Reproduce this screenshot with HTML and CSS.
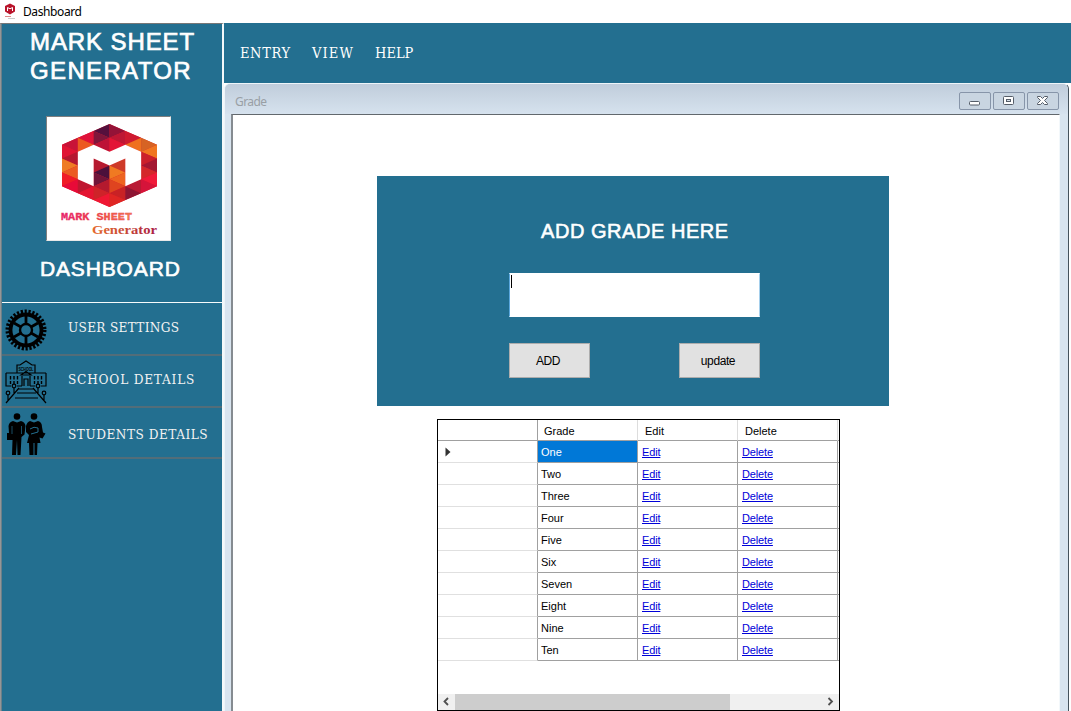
FILE: index.html
```html
<!DOCTYPE html>
<html lang="en">
<head>
<meta charset="utf-8">
<title>Dashboard</title>
<link rel="stylesheet" href="styles.css">
</head>
<body>
<header class="titlebar">
  <svg class="app-icon" width="14" height="18" viewBox="0 0 14 18"><path d="M7 0.500L12 3v5.500L7 11.500 2 8.500V3z" fill="#b9142b"/><path d="M4.500 8V4.500l2.500 1.300 2.500-1.300V8" fill="none" stroke="#fff" stroke-width="1"/><path d="M2 13.500h6" stroke="#d88"/><path d="M5 15.500h7" stroke="#ccc"/></svg>
  <span class="app-title">Dashboard</span>
</header>
<div class="shell">
  <aside class="sidebar">
    <h1 class="brand"><span class="brand-a">MARK SHEET</span><br><span class="brand-b">GENERATOR</span></h1>
    <div class="logo">
      <svg width="123" height="123" viewBox="0 0 123 123">
        <defs>
          <linearGradient id="g1"><stop offset="0" stop-color="#e6177c"/><stop offset=".5" stop-color="#ee4540"/><stop offset="1" stop-color="#f58a4b"/></linearGradient>
          <linearGradient id="g2"><stop offset="0" stop-color="#e56a2c"/><stop offset=".5" stop-color="#c94a35"/><stop offset="1" stop-color="#a91c42"/></linearGradient>
        </defs>
        <g transform="translate(15 7) scale(15.830 6.920)">
          <path d="M3 0L6 3V9L3 12 0 9V3z" fill="#d81d2c"/>
          <path d="M0 3L1 2V4z" fill="#c81338"/><path d="M0 3V5L1 4z" fill="#e01434"/><path d="M0 5L1 4V6z" fill="#b51830"/><path d="M0 5V7L1 6z" fill="#ef7c24"/><path d="M0 7L1 6V8z" fill="#eb5b22"/><path d="M0 7V9L1 8z" fill="#f01b27"/><path d="M0 9L1 8V10z" fill="#e80a38"/>
          <path d="M1 2L2 1V3z" fill="#df123a"/><path d="M1 2V4L2 3z" fill="#ec5a22"/><path d="M1 8V10L2 9z" fill="#bf1630"/><path d="M1 10L2 9V11z" fill="#e41431"/>
          <path d="M2 1L3 0V2z" fill="#55103d"/><path d="M2 1V3L3 2z" fill="#80163b"/><path d="M2 3L3 2V4z" fill="#bd1236"/>
          <path d="M2 5V7L3 6z" fill="#b61a30"/><path d="M2 7L3 6V8z" fill="#4b103b"/><path d="M2 7V9L3 8z" fill="#721539"/><path d="M2 9L3 8V10z" fill="#b41a2e"/><path d="M2 9V11L3 10z" fill="#ce2329"/><path d="M2 11L3 10V12z" fill="#ef1733"/>
          <path d="M3 0L4 1 3 2z" fill="#941337"/><path d="M3 2L4 1V3z" fill="#be1734"/><path d="M3 2V4L4 3z" fill="#e31436"/>
          <path d="M3 6L4 5V7z" fill="#ce3a29"/><path d="M3 6V8L4 7z" fill="#f07a22"/><path d="M3 8L4 7V9z" fill="#ed6320"/><path d="M3 8V10L4 9z" fill="#df441f"/><path d="M3 10L4 9V11z" fill="#c82225"/><path d="M3 10V12L4 11z" fill="#df2623"/>
          <path d="M4 1L5 2 4 3z" fill="#ce1a30"/><path d="M4 3L5 2V4z" fill="#ef701f"/><path d="M4 9L5 8V10z" fill="#b91a34"/><path d="M4 9V11L5 10z" fill="#8d1533"/>
          <path d="M5 2L6 3 5 4z" fill="#d66324"/><path d="M5 4L6 3V5z" fill="#f07620"/><path d="M5 4V6L6 5z" fill="#cb202b"/><path d="M5 6L6 5V7z" fill="#a41832"/><path d="M5 6V8L6 7z" fill="#d4282b"/><path d="M5 8L6 7V9z" fill="#f01a3a"/><path d="M5 8V10L6 9z" fill="#d5143a"/>
          <path d="M1 4L2 3 3 4 4 3 5 4V8L4 9V5L3 6 2 5V9L1 8z" fill="#fff"/>
        </g>
        <text class="logo-mark" x="14" y="103" textLength="71" lengthAdjust="spacingAndGlyphs" fill="url(#g1)">MARK SHEET</text>
        <text class="logo-gen" x="45" y="117" textLength="65" lengthAdjust="spacingAndGlyphs" fill="url(#g2)">Generator</text>
      </svg>
    </div>
    <h2 class="section">DASHBOARD</h2>
    <nav class="side-nav">
      <a class="side-item first">
        <svg class="side-icon" width="42" height="42" viewBox="-21 -21 42 42"><circle r="18.500" fill="none" stroke="#000" stroke-width="4" stroke-dasharray="2.200 1.674"/><circle r="15.500" fill="none" stroke="#000" stroke-width="3.800"/><circle r="6" fill="none" stroke="#000" stroke-width="2.400"/><path d="M0-6V-14M0 6V14M5-3L12-7M-5 3L-12 7M5 3L12 7M-5-3L-12-7" stroke="#000" stroke-width="2.800"/></svg>
        <span class="lbl l1">USER SETTINGS</span>
      </a>
      <a class="side-item second">
        <svg class="side-icon" width="42" height="44" viewBox="0 0 42 44"><g fill="none" stroke="#000" stroke-width="1.200"><path d="M12 13V5h3l6-4 6 4h3v8M1 13h40M1 13v13h5M41 13v13h-5M12 26h5M25 26h5M16 15l5-3.500 5 3.500zM17 16v10M25 16v10M19 26v-7h4v7M14 28L1 43M28 28L41 43M14 29h14M12 33h19M10 38h23M3 40v-5M39 40v-5M9 33v-5M33 33v-5"/><path stroke-width="1.400" stroke-dasharray="3.500 1.500" d="M5.500 16v8M9 16v8M12.500 16v8M29.500 16v8M33 16v8M36.500 16v8"/><circle cx="3" cy="33" r="1.800"/><circle cx="39" cy="33" r="1.800"/><circle cx="9" cy="26" r="1.800"/><circle cx="33" cy="26" r="1.800"/></g><text class="school-sign" x="13.500" y="10.500" textLength="15" lengthAdjust="spacingAndGlyphs">SCHOOL</text></svg>
        <span class="lbl l2">SCHOOL DETAILS</span>
      </a>
      <a class="side-item third">
        <svg class="side-icon" width="40" height="43" viewBox="0 0 40 43"><circle cx="10" cy="3.500" r="3.300"/><path d="M6 8l4 1.500L14 8q4 1 4.500 5l-1 8.500-3 2.500-1 18H10.500L10 27l-1 15H5L5.500 27H0v-7h2l-.5-7Q2 9 6 8z"/><path d="M5 13v8M14.500 13v8" stroke="#236f90" stroke-width=".7"/><circle cx="27" cy="3.500" r="3.300"/><path d="M23 8l4 1.500L31 8q4 1 4 6l1 5.500 2.500 1-3 5-3-1 1 5.500h-3l-.5 12H27.500V30h-1v12h-4l-.5-12H20l2-8-3-3V13q1-4 4-5z"/><path d="M23 16q4-3 8-1v4l-7 2" fill="none" stroke="#236f90"/></svg>
        <span class="lbl l3">STUDENTS DETAILS</span>
      </a>
    </nav>
  </aside>
  <main class="main">
    <nav class="menu"><span class="m1">ENTRY</span><span class="m2">VIEW</span><span class="m3">HELP</span></nav>
    <section class="window">
      <div class="caption"><span class="caption-text">Grade</span>
        <div class="controls">
          <span class="ctl"><svg width="30" height="16"><rect x="9.500" y="8.500" width="10" height="3.500" rx="1" fill="#fff" stroke="#555d68"/></svg></span>
          <span class="ctl"><svg width="30" height="16"><rect x="9.500" y="3.500" width="10" height="8" rx="1" fill="#fff" stroke="#555d68"/><rect x="12.500" y="6.500" width="4" height="2" fill="#d7e0e9" stroke="#555d68"/></svg></span>
          <span class="ctl"><svg width="30" height="16"><path d="M9.500 3.500h3l2 2 2-2h3v1L16.500 7.500l3 3v1h-3l-2-2-2 2h-3v-1l3-3-3-3z" fill="#fff" stroke="#555d68"/></svg></span>
        </div>
      </div>
      <div class="client">
        <form class="card">
          <h3 class="card-title">ADD GRADE HERE</h3>
          <div class="field"><i class="caret"></i></div>
          <div class="actions"><button type="button" class="btn b1">ADD</button><button type="button" class="btn b2">update</button></div>
        </form>
        <div class="grid">
          <div class="row head"><span></span><span>Grade</span><span>Edit</span><span>Delete</span><span></span></div>
          <div class="row selected"><span><svg class="arrow" width="6" height="10"><path d="M0.500 0.500L5.500 5 0.500 9.500z" fill="#333"/></svg></span><span>One</span><span><a>Edit</a></span><span><a>Delete</a></span><span></span></div>
          <div class="row"><span></span><span>Two</span><span><a>Edit</a></span><span><a>Delete</a></span><span></span></div>
          <div class="row"><span></span><span>Three</span><span><a>Edit</a></span><span><a>Delete</a></span><span></span></div>
          <div class="row"><span></span><span>Four</span><span><a>Edit</a></span><span><a>Delete</a></span><span></span></div>
          <div class="row"><span></span><span>Five</span><span><a>Edit</a></span><span><a>Delete</a></span><span></span></div>
          <div class="row"><span></span><span>Six</span><span><a>Edit</a></span><span><a>Delete</a></span><span></span></div>
          <div class="row"><span></span><span>Seven</span><span><a>Edit</a></span><span><a>Delete</a></span><span></span></div>
          <div class="row"><span></span><span>Eight</span><span><a>Edit</a></span><span><a>Delete</a></span><span></span></div>
          <div class="row"><span></span><span>Nine</span><span><a>Edit</a></span><span><a>Delete</a></span><span></span></div>
          <div class="row"><span></span><span>Ten</span><span><a>Edit</a></span><span><a>Delete</a></span><span></span></div>
          <div class="scroll">
            <svg width="17" height="15"><path d="M10 4L6.500 7.500 10 11" fill="none" stroke="#505050" stroke-width="1.800"/></svg>
            <i class="thumb"></i>
            <svg width="17" height="15"><path d="M6.500 4L10 7.500 6.500 11" fill="none" stroke="#505050" stroke-width="1.800"/></svg>
          </div>
        </div>
      </div>
    </section>
  </main>
</div>
</body>
</html>
```
FILE: styles.css
```css
* { box-sizing: border-box; }
body { margin: 0; width: 1071px; height: 711px; overflow: hidden; background: #fff; font-family: "Liberation Sans", Arial, sans-serif; color: #000; }
.titlebar { height: 23px; display: flex; padding: 3px 0 0 3px; }
.app-title { font: 12px/18px "Noto Sans", sans-serif; margin-left: 6px; letter-spacing: -.55px; }
.app-title { letter-spacing: -.4px; }
.shell { display: flex; height: 688px; }
.sidebar { width: 224px; flex: none; background: #236f90; border-left: 1px solid #969696; border-right: 2px solid #f4f8fa; border-top: 1px solid #777; box-shadow: inset 1px 0 #6b7f88; }
.brand { margin: 3px 0 0 29px; height: 58px; font-size: 24px; line-height: 29px; font-weight: 400; color: #fff; -webkit-text-stroke: .7px #fff; white-space: nowrap; }
.brand-a { letter-spacing: .9px; }
.brand-b { letter-spacing: 1.350px; }
.logo { width: 125px; height: 125px; margin: 31px 0 0 45px; background: #fff; border: 1px solid; border-color: #7f7f7f #e8e8e8 #e8e8e8 #7f7f7f; }
.logo svg { display: block; }
.logo-mark { font: bold 10px "Liberation Mono", monospace; stroke: #ea3b57; stroke-width: .3px; }
.logo-gen { font: bold 13px "Liberation Serif", serif; }
.section { margin: 15px 0 0 39px; height: 46px; color: #fff; font-size: 21px; line-height: 26px; font-weight: 400; letter-spacing: .85px; -webkit-text-stroke: .65px #fff; white-space: nowrap; }
.side-nav { border-top: 1px solid #f7fbfc; margin: 0 0 0 1px; }
.side-item { height: 52px; display: flex; border-bottom: 2px solid #526d79; padding: 6px 0 0 3px; }
.side-item.first { height: 53px; }
.side-item.second { padding-top: 4px; }
.side-item.third { height: 51px; padding: 5px 0 0 5px; }
.side-icon { flex: none; }
.school-sign { font: bold 5px "Liberation Sans", sans-serif; }
.lbl { font: 13.500px/20px "DejaVu Serif Condensed", "DejaVu Serif", serif; font-stretch: condensed; color: #f2f2f2; white-space: nowrap; margin: 8px 0 0 21px; }
.l1 { letter-spacing: .3px; }
.l2 { letter-spacing: .8px; margin: 9px 0 0 21px; }
.third .lbl { letter-spacing: .5px; margin: 11px 0 0 21px; }
.main { flex: 1; min-width: 0; background: #fff; }
.menu { height: 60px; background: #236f90; display: flex; padding: 20px 0 0 16px; color: #fff; font: 14.500px/20px "DejaVu Serif Condensed", "DejaVu Serif", serif; font-stretch: condensed; }
.m1 { width: 72px; letter-spacing: .6px; }
.m2 { width: 63px; letter-spacing: 1.100px; }
.window { width: 845px; height: 640px; background: #d8e4ef; border-right: 1px solid #45525c; border-left: 1px solid #edf4f9; border-top: 1px solid #eef5f9; border-radius: 6px 6px 0 0; padding: 0 8px 0 6px; }
.caption { height: 30px; margin: 0 -8px 0 -6px; padding: 8px 9px 0 10px; display: flex; justify-content: space-between; background: linear-gradient(#c0cddb, #d6e2ee); border-radius: 5px 5px 0 0; }
.caption-text { font: 12px/20px "Noto Sans", sans-serif; color: #999fa5; letter-spacing: -.6px; }
.controls { display: flex; gap: 2px; }
.ctl { width: 32px; height: 18px; border: 1px solid #8795a9; border-radius: 2px; background: #c9d5e1; }
.ctl svg { display: block; }
.client { height: 609px; background: #fff; border: 1px solid #f3f8fb; border-left: 2px solid #858b91; border-top: 1px solid #62686d; padding: 61px 0 0 144px; }
.card { width: 512px; height: 230px; background: #236f90; padding: 43px 0 0 132px; }
.card-title { margin: 0 0 0 32px; font-size: 20px; line-height: 24px; font-weight: 400; letter-spacing: .55px; color: #fff; -webkit-text-stroke: .55px #fff; white-space: nowrap; }
.field { width: 251px; height: 44px; margin-top: 30px; border: 1px solid #fff; border-left-color: #5ba7dd; border-right-color: #a5cfec; background: #fff; padding: 1px; }
.caret { display: block; width: 1px; height: 13px; background: #000; }
.actions { width: 251px; display: flex; justify-content: space-between; margin-top: 26px; }
.btn { width: 81px; height: 35px; border: 1px solid #adadad; background: #e1e1e1; padding: 0; font: 12px "Liberation Sans", sans-serif; letter-spacing: -.4px; color: #000; }
.b1, .b2 { padding-right: 3px; }
.grid { width: 403px; height: 292px; margin: 13px 0 0 60px; border: 1px solid #000; font-size: 11px; line-height: 23px; overflow: hidden; }
.row { display: grid; grid-template-columns: 100px 100px 100px 100px 1px; grid-template-rows: 22px; height: 22px; }
.row span { border-right: 1px solid #a0a0a0; border-bottom: 1px solid #a0a0a0; padding-left: 3px; white-space: nowrap; }
.row span:nth-child(3), .row span:nth-child(4) { padding-left: 4px; }
.row span:first-child { border-bottom-color: #e0e0e0; padding-left: 7px; }
.row span:last-child { border-right: 0; padding: 0; }
.head { height: 21px; grid-template-rows: 21px; }
.row.head span { padding-left: 7px; border-right-color: #ddd; border-bottom-color: #a0a0a0; }
.row.head span:nth-child(2) { padding-left: 6px; }
.row.head span:first-child { border-right-color: #a0a0a0; }
.row.head span:last-child { padding: 0; }
.row.selected span:nth-child(2) { background: #0078d7; color: #fff; }
.arrow { display: block; margin-top: 6px; }
.row a { color: #0000d8; letter-spacing: -.15px; text-decoration: underline; text-underline-offset: 1px; }
.scroll { margin-top: 33px; height: 16px; display: flex; background: #f0f0f0; }
.thumb { width: 275px; background: #cdcdcd; margin-right: 92px; }
```
